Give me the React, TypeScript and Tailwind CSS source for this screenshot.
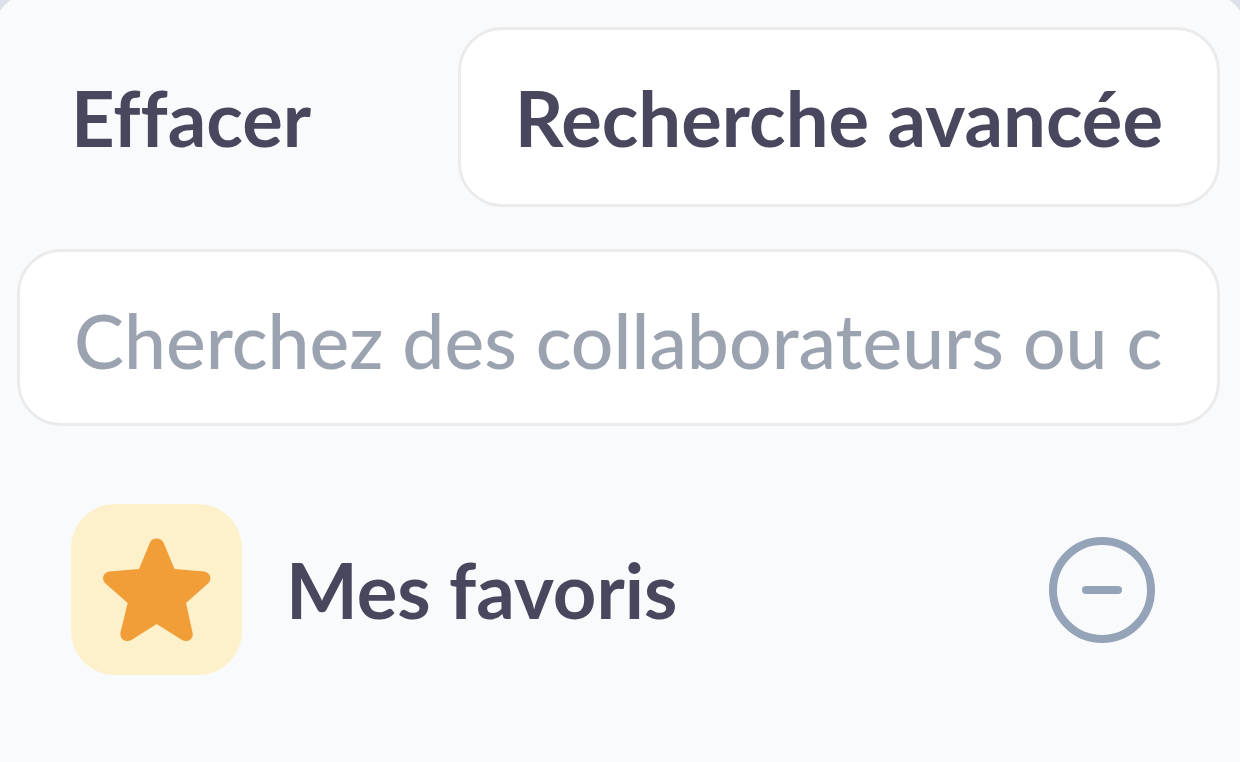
import { useState } from 'react';

export default function App() {
  const [search, setSearch] = useState('');

  return (
    <div className="flex min-h-screen flex-col overflow-hidden bg-[#dce1e8] font-['Lato',sans-serif] text-[#48475e] [font-variant-ligatures:none]">
      <main className="-mx-2 -mt-2 flex-1 rounded-t-[44px] bg-[#f9fafc] px-[25px] pt-[35px]">
        <div className="flex items-center justify-between pr-[3px]">
          <button type="button" className="px-[54px] pt-0.5 text-[76px] leading-[96px] font-bold">
            Effacer
          </button>
          <button
            type="button"
            className="h-[180px] rounded-[44px] border-3 border-[#ebebec] bg-white px-[54px] pt-0.5 text-[76px] leading-[96px] font-bold"
          >
            Recherche avancée
          </button>
        </div>

        <div className="mt-[42px] pr-[3px]">
          <input
            type="text"
            aria-label="Cherchez des collaborateurs ou contacts"
            placeholder="Cherchez des collaborateurs ou contacts"
            value={search}
            onChange={(e) => setSearch(e.target.value)}
            className="block h-[177px] w-full rounded-[44px] border-3 border-[#ebebec] bg-white px-[54px] pt-1 text-[75px] font-medium placeholder:text-[#9ca3b0]"
          />
        </div>

        <div className="mt-[78px] flex items-center pr-[68px] pl-[54px]">
          <div className="flex size-[171px] items-center justify-center rounded-[44px] bg-[#fdf1cb]">
            <svg viewBox="0 0 108 104" className="h-[104px] w-[108px]" fill="#f19d38">
              <path d="M47 4.500C49-1 58-1 60.500 4.500L71.500 31L101 33.500C107.500 34.500 109.500 41.500 105 45.500L83 65L89.500 94.500C91 101 85 105 79 102L53.700 86L28.500 102C22.500 105 16.500 101 17.500 94.500L24.700 65L2.500 45.500C-2 41.500 0 34.500 6.500 33.500L36 31Z" />
            </svg>
          </div>
          <h2 className="ml-11 flex-1 text-[76px] leading-[96px] font-bold">Mes favoris</h2>
          <button type="button" aria-label="Réduire">
            <svg viewBox="0 0 106 106" className="size-[106px]" fill="none" stroke="#94a3b8" strokeWidth="8">
              <circle cx="53" cy="53" r="49" />
              <path d="M37 53H69" strokeLinecap="round" />
            </svg>
          </button>
        </div>
      </main>
    </div>
  );
}
